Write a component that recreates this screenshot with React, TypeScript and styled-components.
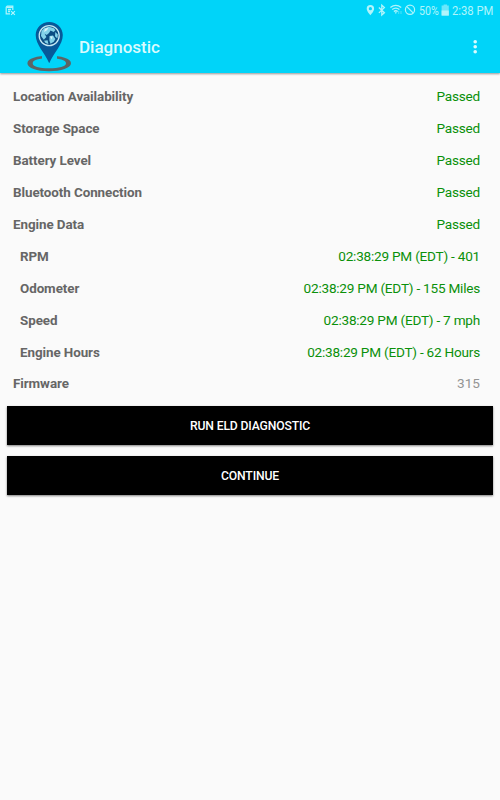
import React from 'react';
import styled, { createGlobalStyle } from 'styled-components';

const GlobalStyle = createGlobalStyle`
  * { box-sizing: border-box; }
  body { margin: 0; background: #fafafa; font-family: Roboto, sans-serif; }
`;

const Screen = styled.div`
  width: 500px;
  height: 800px;
  overflow: hidden;
  display: flex;
  flex-direction: column;
  background: #fafafa;
`;

const Header = styled.header`
  height: 73px;
  flex: none;
  background: #00d4f9;
  box-shadow: 0 1px 2px rgba(0, 0, 0, 0.4);
`;

const StatusBar = styled.div`
  height: 21px;
  display: flex;
  align-items: center;
  justify-content: space-between;
  padding: 0 7px 0 5px;
  color: #b0f4fb;
`;

const StatusIcons = styled.div`
  display: flex;
  align-items: center;
  height: 21px;
`;

const StatusText = styled.span<{ $width: number; $scale: number }>`
  width: ${(p) => p.$width}px;
  font-size: 12.5px;
  line-height: 21px;
  white-space: nowrap;
  transform: scaleX(${(p) => p.$scale});
  transform-origin: left center;
`;

const Toolbar = styled.div`
  height: 52px;
  display: flex;
  align-items: center;
  padding: 0 17px 0 26px;
`;

const Title = styled.h1`
  margin: 0 auto 1px 6px;
  font-size: 17px;
  font-weight: 500;
  line-height: 22px;
  color: #d9fbfe;
`;

const MenuButton = styled.button`
  display: flex;
  padding: 0;
  border: 0;
  background: none;
`;

const List = styled.dl`
  margin: 7.4px 0 0;
  padding: 0 20px 0 13px;
`;

const Row = styled.div<{ $nested?: boolean }>`
  height: 31.9px;
  display: flex;
  align-items: baseline;
  justify-content: space-between;
  padding-left: ${(p) => (p.$nested ? 7 : 0)}px;
`;

const Label = styled.dt`
  font-size: 13.4px;
  line-height: 32px;
  letter-spacing: -0.07px;
  font-weight: 700;
  color: #666;
`;

const Value = styled.dd<{ $muted?: boolean }>`
  margin: 0;
  font-size: 13.6px;
  line-height: 32px;
  letter-spacing: ${(p) => (p.$muted ? 0 : -0.23)}px;
  color: ${(p) => (p.$muted ? '#949494' : '#0a900a')};
`;

const Actions = styled.div`
  display: flex;
  flex-direction: column;
  gap: 11px;
  padding: 6.6px 7px 0;
`;

const ActionButton = styled.button`
  height: 39px;
  border: 0;
  padding: 1px 0 0;
  background: #000;
  color: #fff;
  font: 500 12.2px Roboto, sans-serif;
  letter-spacing: -0.15px;
  text-transform: uppercase;
  box-shadow: 0 1px 2px rgba(0, 0, 0, 0.5);
`;

const rows: { label: string; value: string; nested?: boolean; muted?: boolean }[] = [
  { label: 'Location Availability', value: 'Passed' },
  { label: 'Storage Space', value: 'Passed' },
  { label: 'Battery Level', value: 'Passed' },
  { label: 'Bluetooth Connection', value: 'Passed' },
  { label: 'Engine Data', value: 'Passed' },
  { label: 'RPM', value: '02:38:29 PM (EDT) - 401', nested: true },
  { label: 'Odometer', value: '02:38:29 PM (EDT) - 155 Miles', nested: true },
  { label: 'Speed', value: '02:38:29 PM (EDT) - 7 mph', nested: true },
  { label: 'Engine Hours', value: '02:38:29 PM (EDT) - 62 Hours', nested: true },
  { label: 'Firmware', value: '315', muted: true },
];

const NoticeIcon = () => (
  <svg width="11" height="11" viewBox="0 0 11 11" fill="none" stroke="currentColor">
    <path d="M5 8.8H1.2V2.2L2.2 1.2H7.8V5" strokeWidth="1.2" />
    <path d="M1.5 2.2H7.8M3 4.5H6M3 6.5H5" strokeWidth="1.4" />
    <path d="M6.1 6.1L9.9 9.9M9.9 6.1L6.1 9.9" strokeWidth="1.2" />
  </svg>
);

// Location, bluetooth, wifi and do-not-disturb indicators.
const IndicatorIcons = () => (
  <svg width="53" height="21" viewBox="0 0 53 21" fill="none" stroke="currentColor">
    <path
      d="M4.4 5A3.7 3.7 0 0 0 .7 8.7C.7 11.2 4.4 15.2 4.4 15.2S8.1 11.2 8.1 8.7A3.7 3.7 0 0 0 4.4 5ZM4.4 7.1A1.6 1.6 0 1 1 4.4 10.3A1.6 1.6 0 0 1 4.4 7.1Z"
      fill="currentColor"
      fillRule="evenodd"
      stroke="none"
    />
    <path d="M12.9 7.5L18.4 12.8L15.8 15V5.2L18.4 7.6L12.9 12.9" strokeWidth="1.3" />
    <path d="M24.4 7.5Q29.8 3.2 35.2 7.5M26.2 9.5Q29.8 6.6 33.4 9.5M27.9 11.5Q29.8 10 31.7 11.5" strokeWidth="1.3" />
    <path d="M28.7 12.2H30.9L29.8 13.9Z" fill="currentColor" stroke="none" />
    <path d="M32.7 11V14M35 11V14" strokeWidth="1" opacity=".45" />
    <circle cx="44" cy="9.8" r="4.6" strokeWidth="1.2" />
    <path d="M40.9 6.7L47.1 12.9" strokeWidth="1.2" />
  </svg>
);

const BatteryIcon = () => (
  <svg width="11" height="21" viewBox="0 0 11 21">
    <path d="M2.6 4.4H6V5.5H7.8V15.6H.6V5.5H2.6Z" fill="currentColor" opacity=".6" />
    <path d="M.6 10.5H7.8V15.6H.6Z" fill="currentColor" />
  </svg>
);

const LogoIcon = () => (
  <svg width="47" height="52" viewBox="26 21 47 52">
    <path
      fillRule="evenodd"
      fill="#5b6567"
      d="M49 55.8C61 55.8 71 58.5 71 63.2S61 71.2 49 71.2S27.4 68 27.4 63.2S37 55.8 49 55.8ZM49 58.2C39 58.2 32.7 60 32.7 63.2S39 68.3 49 68.3S66 66.5 66 63.2S59 58.2 49 58.2Z"
    />
    <path d="M42 54H57V60L53 65H46L42 60Z" fill="#00d4f9" />
    <path d="M49.2 21.9C41.8 21.9 35.7 27.7 35.7 35.1C35.7 45 44.5 52.3 49.2 63.2C54 52.3 62.8 45 62.8 35.1C62.8 27.7 56.7 21.9 49.2 21.9Z" fill="#075999" />
    <circle cx="49.2" cy="35.6" r="10" fill="#0b4e83" stroke="#c5e8f4" strokeWidth="1.3" />
    <path
      fill="#83d3e9"
      d="M41.5 31L44.5 28L49 26.8L53.5 27.9L55.5 30L53.7 32.1L50.5 30.5L49 33L46.7 35L44.6 33.8L46.4 37L43.8 39.8L41 36ZM55.3 32L57.8 34.4L57.4 38.5L55 36.2ZM49.5 36L53 35.4L55.4 39L53.8 41.8L50.5 43.7L49.4 40.5ZM44 40.7L47.6 40.2L48.4 44L45.6 43Z"
    />
    <path fill="#d8f4fa" d="M45 28.8L48.5 27.6L47 30.2L44 32ZM50 36.8L52.6 36.2L51.8 39.5Z" />
  </svg>
);

const MoreIcon = () => (
  <svg width="16" height="16" viewBox="0 0 16 16" fill="#d9fbfe">
    <circle cx="8.2" cy="2.7" r="1.8" />
    <circle cx="8.2" cy="7.7" r="1.8" />
    <circle cx="8.2" cy="12.7" r="1.8" />
  </svg>
);

export default function App() {
  return (
    <Screen>
      <GlobalStyle />
      <Header>
        <StatusBar>
          <NoticeIcon />
          <StatusIcons>
            <IndicatorIcons />
            <StatusText $width={22} $scale={0.85}>50%</StatusText>
            <BatteryIcon />
            <StatusText $width={41} $scale={0.9}>2:38 PM</StatusText>
          </StatusIcons>
        </StatusBar>
        <Toolbar>
          <LogoIcon />
          <Title>Diagnostic</Title>
          <MenuButton aria-label="More options">
            <MoreIcon />
          </MenuButton>
        </Toolbar>
      </Header>
      <List>
        {rows.map((row) => (
          <Row key={row.label} $nested={row.nested}>
            <Label>{row.label}</Label>
            <Value $muted={row.muted}>{row.value}</Value>
          </Row>
        ))}
      </List>
      <Actions>
        <ActionButton>Run ELD Diagnostic</ActionButton>
        <ActionButton>Continue</ActionButton>
      </Actions>
    </Screen>
  );
}
